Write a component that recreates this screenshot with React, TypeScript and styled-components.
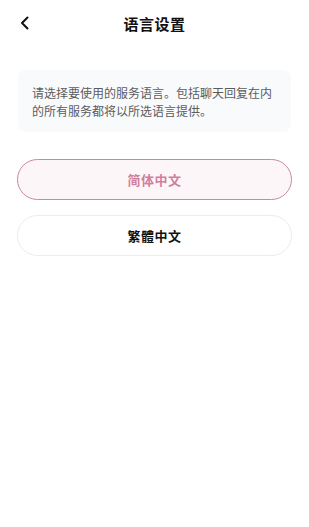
import React, { useState } from "react";
import styled, { createGlobalStyle } from "styled-components";

const GlobalStyle = createGlobalStyle`
  html, body {
    margin: 0;
    padding: 0;
    background: #ffffff;
  }
  body {
    font-family: "Noto Sans CJK SC", "Noto Sans", sans-serif;
  }
`;

const Page = styled.div`
  width: 309px;
  min-height: 527px;
  background: #ffffff;
  display: flex;
  flex-direction: column;
`;

const Header = styled.div`
  height: 46px;
  display: flex;
  align-items: center;
  justify-content: center;
  position: relative;
`;

const BackButton = styled.button`
  position: absolute;
  left: 14px;
  top: 11px;
  width: 22px;
  height: 24px;
  padding: 0;
  border: none;
  background: transparent;
  display: flex;
  align-items: center;
  justify-content: center;
`;

const Title = styled.h1`
  margin: 0;
  font-size: 15px;
  font-weight: 700;
  color: #111111;
  letter-spacing: 0.5px;
`;

const Content = styled.div`
  padding: 24px 17px 0 17px;
  display: flex;
  flex-direction: column;
`;

const Notice = styled.div`
  background: #f9fafc;
  border-radius: 8px;
  padding: 14px 14px 12px 14px;
  font-size: 12px;
  line-height: 18px;
  color: #5c5c5c;
  margin: 0 1px 27px 1px;
`;

const Options = styled.div`
  display: flex;
  flex-direction: column;
  gap: 15px;
`;

const Option = styled.button<{ $active: boolean }>`
  height: 41px;
  border-radius: 21px;
  border: 1px solid ${(p) => (p.$active ? "#c98aa1" : "#ececec")};
  background: ${(p) => (p.$active ? "#fdf6f9" : "#ffffff")};
  color: ${(p) => (p.$active ? "#d27e9d" : "#111111")};
  font-family: "Noto Sans CJK SC", "Noto Sans", sans-serif;
  font-size: 13px;
  font-weight: 700;
  letter-spacing: 0.5px;
  cursor: pointer;
`;

const languages = ["简体中文", "繁體中文"];

export default function App() {
  const [selected, setSelected] = useState(0);
  return (
    <Page>
      <GlobalStyle />
      <Header>
        <BackButton aria-label="返回">
          <svg width="10" height="14" viewBox="0 0 10 14">
            <path d="M7.5 1.5 L2 7 L7.5 12.5" fill="none" stroke="#111" strokeWidth="2" strokeLinecap="round" strokeLinejoin="round" />
          </svg>
        </BackButton>
        <Title>语言设置</Title>
      </Header>
      <Content>
        <Notice>请选择要使用的服务语言。包括聊天回复在内的所有服务都将以所选语言提供。</Notice>
        <Options>
          {languages.map((l, i) => (
            <Option key={l} $active={selected === i} onClick={() => setSelected(i)}>
              {l}
            </Option>
          ))}
        </Options>
      </Content>
    </Page>
  );
}
